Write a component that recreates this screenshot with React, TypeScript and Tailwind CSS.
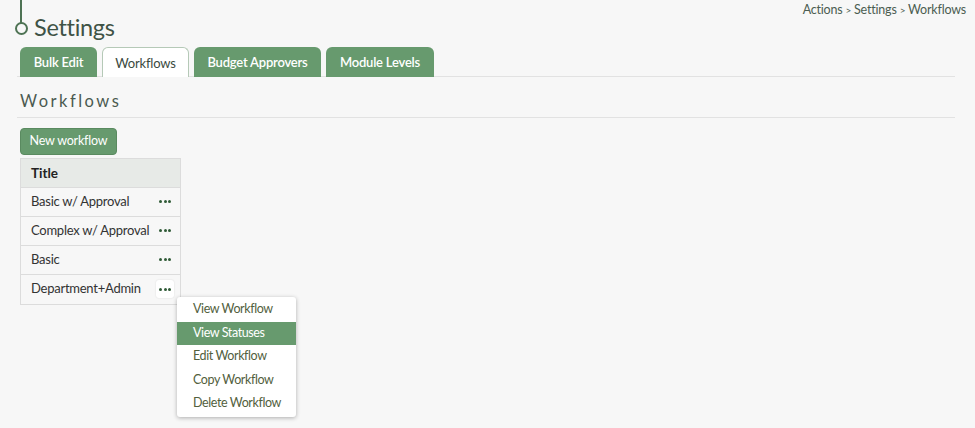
import React from 'react';

const TABS = [
  { label: 'Bulk Edit', w: 'w-[77px]' },
  { label: 'Workflows', w: 'w-[87px]' },
  { label: 'Budget Approvers', w: 'w-[127px]' },
  { label: 'Module Levels', w: 'w-[108px]' },
];
const ROWS = ['Basic w/ Approval', 'Complex w/ Approval', 'Basic', 'Department+Admin'];
const MENU = ['View Workflow', 'View Statuses', 'Edit Workflow', 'Copy Workflow', 'Delete Workflow'];

function Dots() {
  return (
    <span className="flex gap-[1.5px]">
      <span className="w-[3px] h-[3px] rounded-full bg-[#2f5a36]" />
      <span className="w-[3px] h-[3px] rounded-full bg-[#2f5a36]" />
      <span className="w-[3px] h-[3px] rounded-full bg-[#2f5a36]" />
    </span>
  );
}

export default function App() {
  return (
    <div className="w-[975px] h-[428px] bg-[#f7f7f7] overflow-hidden relative font-['Lato',sans-serif] text-[#333]">
      {/* timeline marker */}
      <div className="absolute left-[20px] top-0 w-[2px] h-[23px] bg-[#4e7354]" />
      <div className="absolute left-[15px] top-[22px] w-[13px] h-[13px] rounded-full border-2 border-[#4e7354]" />

      <div className="flex justify-between">
        <h1 className="ml-[34px] mt-[12px] text-[23.5px] leading-[30px] tracking-[-0.3px] text-[#3f5346]">Settings</h1>
        <div className="mr-[9px] mt-[1px] text-[12.5px] tracking-[-0.2px] text-[#4b5d51]">
          Actions <span className="text-[10px]">&gt;</span> Settings <span className="text-[10px]">&gt;</span> Workflows
        </div>
      </div>

      {/* tabs */}
      <div className="ml-[17px] mr-[20px] mt-[5px] flex gap-[5px] pl-[3px] border-b border-[#e2e2e2] h-[30px]">
        {TABS.map((t) => (
          <div
            key={t.label}
            className={`${t.w} h-[30px] pt-[2px] flex items-center justify-center rounded-t-[6px] text-[13px] tracking-[-0.2px] ${
              t.label === 'Workflows'
                ? 'bg-white border border-b-0 border-[#b5c9b7] text-[#3a4a3e]'
                : 'bg-[#679a6e] text-white font-semibold'
            }`}
          >
            {t.label}
          </div>
        ))}
      </div>

      <div className="ml-[17px] mr-[20px] mt-[12px] border-b border-[#e2e2e2] pb-[3px]">
        <h2 className="ml-[3px] text-[16.5px] tracking-[2.5px] text-[#4b5a50]">Workflows</h2>
      </div>

      <div className="ml-[20px] mt-[9px]">
        <button className="w-[97px] h-[27px] rounded-[4px] bg-[#679a6e] border border-[#5a8a60] text-white text-[12.5px] tracking-[-0.2px]">
          New workflow
        </button>

        <div className="mt-[3px] w-[161px] border border-[#dcdcdc]">
          <div className="h-[29px] px-[10px] flex items-center bg-[#e7eae7] border-b border-[#dcdcdc] font-bold text-[13.5px] text-[#222]">
            Title
          </div>
          {ROWS.map((r, i) => (
            <div
              key={r}
              className={`h-[29px] pl-[10px] pr-[9px] flex items-center justify-between text-[13px] tracking-[-0.25px] text-[#333] whitespace-nowrap ${
                i < ROWS.length - 1 ? 'border-b border-[#dcdcdc]' : ''
              }`}
            >
              <span>{r}</span>
              {i === ROWS.length - 1 ? (
                <span className="w-[18px] h-[18px] -mr-[3px] bg-white rounded-[3px] flex items-center justify-center shadow-[0_0_2px_rgba(0,0,0,0.12)]">
                  <Dots />
                </span>
              ) : (
                <Dots />
              )}
            </div>
          ))}
        </div>
      </div>

      {/* dropdown menu */}
      <div className="absolute left-[177px] top-[297px] w-[119px] bg-white rounded-[3px] shadow-[0_1px_4px_rgba(0,0,0,0.3)] py-[1px]">
        {MENU.map((m) => (
          <div
            key={m}
            className={`h-[23.5px] pl-[16px] flex items-center text-[12.5px] tracking-[-0.4px] ${
              m === 'View Statuses' ? 'bg-[#679a6e] text-white' : 'text-[#52603d]'
            }`}
          >
            {m}
          </div>
        ))}
      </div>
    </div>
  );
}
